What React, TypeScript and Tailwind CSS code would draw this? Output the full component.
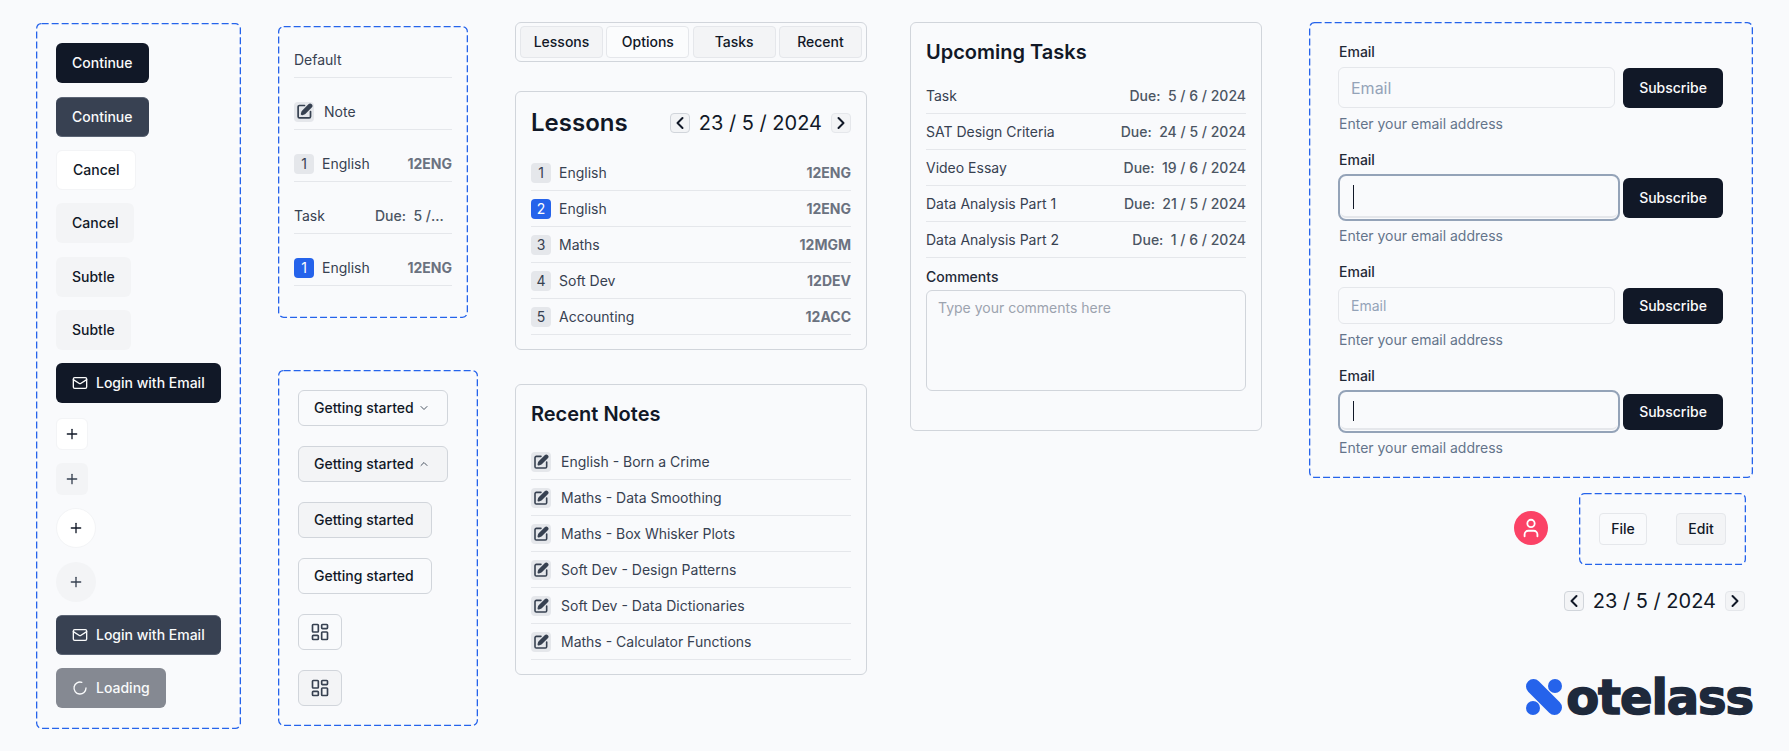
import { ReactNode } from "react";
import {
  ChevronDown,
  ChevronLeft,
  ChevronRight,
  ChevronUp,
  LayoutDashboard,
  LoaderCircle,
  Mail,
  Plus,
  User,
} from "lucide-react";

const BUTTON = "inline-flex items-center justify-center self-start rounded-md text-sm font-medium";
const ROUND_BUTTON = "inline-flex items-center justify-center self-start rounded-full text-sm font-medium";

const LESSONS = [
  { name: "English", code: "12ENG" },
  { name: "English", code: "12ENG", active: true },
  { name: "Maths", code: "12MGM" },
  { name: "Soft Dev", code: "12DEV" },
  { name: "Accounting", code: "12ACC" },
];

const NOTES = [
  "English - Born a Crime",
  "Maths - Data Smoothing",
  "Maths - Box Whisker Plots",
  "Soft Dev - Design Patterns",
  "Soft Dev - Data Dictionaries",
  "Maths - Calculator Functions",
];

const TASKS = [
  { name: "Task", due: "5 / 6 / 2024" },
  { name: "SAT Design Criteria", due: "24 / 5 / 2024" },
  { name: "Video Essay", due: "19 / 6 / 2024" },
  { name: "Data Analysis Part 1", due: "21 / 5 / 2024" },
  { name: "Data Analysis Part 2", due: "1 / 6 / 2024" },
];

function DashedBox({ className, children }: { className: string; children: ReactNode }) {
  return (
    <div className={`relative ${className}`}>
      <svg className="absolute inset-0 w-full h-full pointer-events-none" fill="none">
        <rect
          x="0.65"
          y="0.65"
          rx="5"
          className="w-[calc(100%-1.3px)] h-[calc(100%-1.3px)]"
          stroke="#2563eb"
          strokeWidth="1.3"
          strokeDasharray="7 3"
        />
      </svg>
      {children}
    </div>
  );
}

function Row({ children }: { children: ReactNode }) {
  return (
    <div className="flex h-9 items-center justify-between border-b border-[#e5e7eb] text-sm text-[#374151]">
      {children}
    </div>
  );
}

function NumberBadge({ n, active }: { n: number; active?: boolean }) {
  return (
    <span
      className={`flex h-5 w-5 items-center justify-center rounded text-sm ${
        active ? "bg-[#2563eb] text-white" : "bg-[#e5e7eb] text-[#374151]"
      }`}
    >
      {n}
    </span>
  );
}

function NoteBadge({ size = 16 }: { size?: number }) {
  return (
    <span className="flex h-5 w-5 items-center justify-center rounded bg-[#e5e7eb] text-[#374151]">
      <svg width={size} height={size} viewBox="0 0 24 24" fill="none" stroke="currentColor" strokeWidth="2.4" strokeLinecap="round" strokeLinejoin="round">
        <path d="M12 3.5H5a2 2 0 0 0-2 2V19a2 2 0 0 0 2 2h13.5a2 2 0 0 0 2-2v-7" />
        <path
          fill="currentColor"
          d="M18.375 2.625a1 1 0 0 1 3 3l-9.013 9.014a2 2 0 0 1-.853.505l-2.873.84a.5.5 0 0 1-.62-.62l.84-2.873a2 2 0 0 1 .506-.852z"
        />
      </svg>
    </span>
  );
}

function LessonRow({ n, name, code, active }: { n: number; name: string; code: string; active?: boolean }) {
  return (
    <Row>
      <span className="flex items-center gap-2">
        <NumberBadge n={n} active={active} />
        {name}
      </span>
      <span className="font-bold text-[#6b7280]">{code}</span>
    </Row>
  );
}

function NoteRow({ name }: { name: string }) {
  return (
    <Row>
      <span className="flex items-center gap-2.5">
        <NoteBadge />
        {name}
      </span>
    </Row>
  );
}

function DateNav() {
  return (
    <div className="flex items-center gap-[9px] text-xl text-[#111827]">
      <span className="flex h-5 w-5 items-center justify-center rounded border border-[#d1d5db] bg-[#f3f4f6]">
        <ChevronLeft size={20} strokeWidth={2.4} className="shrink-0" />
      </span>
      <span>23 / 5 / 2024</span>
      <span className="flex h-5 w-5 items-center justify-center rounded border border-[#e5e7eb] bg-[#f3f4f6]">
        <ChevronRight size={20} strokeWidth={2.4} className="shrink-0" />
      </span>
    </div>
  );
}

function Card({ className, children }: { className?: string; children: ReactNode }) {
  return <div className={`rounded-md border border-[#d1d5db] p-[15px] ${className ?? ""}`}>{children}</div>;
}

function EmailField({
  inputH,
  btnH,
  rowGap,
  helpGap,
  focused,
  caretH,
  placeholderSize,
  className,
}: {
  inputH: string;
  btnH: string;
  rowGap: string;
  helpGap: string;
  focused?: boolean;
  caretH?: string;
  placeholderSize?: string;
  className?: string;
}) {
  return (
    <div className={className}>
      <div className="pl-px text-sm leading-5 font-medium text-[#1f2937]">Email</div>
      <div className={`flex items-center ${rowGap} ${focused ? "gap-[3px]" : "gap-2"}`}>
        {focused ? (
          <div className={`${inputH} w-[282px] rounded-lg border-2 border-[#94a3b8] p-px`}>
            <div className="flex h-full items-center rounded-[5px] border-b-2 border-[#e5e7eb] pl-3">
              <span className={`${caretH} w-px bg-[#111827]`} />
            </div>
          </div>
        ) : (
          <input
            placeholder="Email"
            readOnly
            className={`${inputH} ${placeholderSize} w-[277px] rounded-md border border-[#e5e7eb] bg-transparent px-3 outline-none placeholder:text-[#94a3b8]`}
          />
        )}
        <button className={`${btnH} w-[100px] rounded-md bg-[#111827] text-sm font-medium text-[#f9fafb]`}>
          Subscribe
        </button>
      </div>
      <div className={`${helpGap} pl-px text-sm leading-5 text-[#64748b]`}>Enter your email address</div>
    </div>
  );
}

export default function App() {
  return (
    <div className="flex min-h-[751px] items-start overflow-hidden bg-[#f9fafc] pl-9 [font-family:Inter,sans-serif] text-[#111827]">
      {/* buttons */}
      <DashedBox className="mt-[23px] mr-[37px] flex h-[706px] w-[205px] shrink-0 flex-col gap-[13.33px] px-5 pt-[20.33px]">
        <button className={`${BUTTON} h-10 bg-[#111827] px-4 text-[#f9fafb]`}>Continue</button>
        <button className={`${BUTTON} h-10 border-t border-b border-[#5b6474] bg-[#384152] px-4 text-[#f9fafb]`}>Continue</button>
        <button className={`${BUTTON} h-10 border border-[#f3f4f6] bg-white px-4`}>Cancel</button>
        <button className={`${BUTTON} h-10 bg-[#f3f4f6] px-4`}>Cancel</button>
        <button className={`${BUTTON} h-10 bg-[#f3f4f6] px-4`}>Subtle</button>
        <button className={`${BUTTON} h-10 bg-[#f3f4f6] px-4`}>Subtle</button>
        <button className={`${BUTTON} h-10 gap-2 bg-[#111827] px-4 text-[#f9fafb]`}>
          <Mail size={16} />
          Login with Email
        </button>
        <button className={`${BUTTON} mt-px h-8 w-8 border border-[#f3f4f6] bg-white`}>
          <Plus size={16} />
        </button>
        <button className={`${BUTTON} h-8 w-8 bg-[#f3f4f6] text-[#374151]`}>
          <Plus size={16} />
        </button>
        <button className={`${ROUND_BUTTON} h-10 w-10 border border-[#f3f4f6] bg-white`}>
          <Plus size={16} />
        </button>
        <button className={`${ROUND_BUTTON} h-10 w-10 bg-[#f3f4f6] text-[#374151]`}>
          <Plus size={16} />
        </button>
        <button className={`${BUTTON} h-10 gap-2 border-t border-b border-[#5b6474] bg-[#384152] px-4 text-[#f9fafb]`}>
          <Mail size={16} />
          Login with Email
        </button>
        <button className={`${BUTTON} h-10 gap-2 bg-[#111827]/50 px-4 text-[#f9fafb]`}>
          <LoaderCircle size={16} />
          Loading
        </button>
      </DashedBox>

      {/* list row variants + outline buttons */}
      <div className="mt-[26px] mr-[37px] flex w-[200px] shrink-0 flex-col items-start gap-[52px]">
        <DashedBox className="flex w-[190px] flex-col gap-4 px-4 pt-4 pb-8">
          <Row>
            <span>Default</span>
          </Row>
          <Row>
            <span className="flex items-center gap-2.5">
              <NoteBadge size={17} />
              Note
            </span>
          </Row>
          <Row>
            <span className="flex items-center gap-2">
              <NumberBadge n={1} />
              English
            </span>
            <span className="font-bold text-[#6b7280]">12ENG</span>
          </Row>
          <Row>
            <span>Task</span>
            <span className="mr-[7px] w-[70px] truncate font-medium text-[#4b5563]">Due:&nbsp; 5 / 6 / 2024</span>
          </Row>
          <Row>
            <span className="flex items-center gap-2">
              <NumberBadge n={1} active />
              English
            </span>
            <span className="font-bold text-[#6b7280]">12ENG</span>
          </Row>
        </DashedBox>

        <DashedBox className="flex w-[200px] flex-col gap-5 p-5">
          <button className={`${BUTTON} h-9 gap-1 border border-[#d1d5db] pr-[17px] pl-[15px]`}>
            Getting started
            <ChevronDown size={12} className="text-[#4b5563]" />
          </button>
          <button className={`${BUTTON} h-9 gap-1 border border-[#d1d5db] bg-[#f3f4f6] pr-[17px] pl-[15px]`}>
            Getting started
            <ChevronUp size={12} className="text-[#4b5563]" />
          </button>
          <button className={`${BUTTON} h-9 border border-[#d1d5db] bg-[#f3f4f6] pr-[17px] pl-[15px]`}>Getting started</button>
          <button className={`${BUTTON} h-9 border border-[#d1d5db] pr-[17px] pl-[15px]`}>Getting started</button>
          <button className={`${BUTTON} h-9 w-11 border border-[#d1d5db] text-[#374151]`}>
            <LayoutDashboard size={20} />
          </button>
          <button className={`${BUTTON} h-9 w-11 border border-[#d1d5db] bg-[#f3f4f6] text-[#374151]`}>
            <LayoutDashboard size={20} />
          </button>
        </DashedBox>
      </div>

      {/* tabs + lessons + notes */}
      <div className="mt-[22.33px] mr-[43px] flex w-[352px] shrink-0 flex-col">
        <div className="flex h-10 justify-between rounded-md border border-[#d1d5db] px-1 py-[3px]">
          {["Lessons", "Options", "Tasks", "Recent"].map((tab) => (
            <button
              key={tab}
              className={`w-[83px] rounded border border-[#e5e7eb] text-sm font-medium ${
                tab === "Options" ? "bg-[#fbfcfd]" : "bg-[#f3f4f6]"
              }`}
            >
              {tab}
            </button>
          ))}
        </div>

        <Card className="mt-[29px] pb-[14px]">
          <div className="mb-4 flex h-8 items-center justify-between">
            <h2 className="text-2xl font-semibold">Lessons</h2>
            <DateNav />
          </div>
          {LESSONS.map((l, i) => (
            <LessonRow key={i} n={i + 1} name={l.name} code={l.code} active={l.active} />
          ))}
        </Card>

        <Card className="mt-[34px] pb-[14px]">
          <h2 className="mb-4 text-xl font-semibold">Recent Notes</h2>
          {NOTES.map((name) => (
            <NoteRow key={name} name={name} />
          ))}
        </Card>
      </div>

      {/* upcoming tasks */}
      <Card className="mt-[22.33px] mr-[47px] w-[352px] shrink-0 pb-[39px]">
        <h2 className="mb-3 text-xl font-semibold">Upcoming Tasks</h2>
        {TASKS.map((t) => (
          <Row key={t.name}>
            <span>{t.name}</span>
            <span className="font-medium text-[#4b5563]">Due:&nbsp; {t.due}</span>
          </Row>
        ))}
        <div className="mt-[9px] mb-[3px] text-sm leading-5 font-medium text-[#1f2937]">Comments</div>
        <textarea
          readOnly
          placeholder="Type your comments here"
          className="block h-[101px] w-full resize-none rounded-md border border-[#d1d5db] bg-transparent px-[11px] py-[7px] text-sm outline-none placeholder:text-[#9ca3af]"
        />
      </Card>

      {/* form states + misc */}
      <div className="mt-[22px] flex w-[444px] shrink-0 flex-col">
        <DashedBox className="h-[456px] pt-[20.33px] pl-[29px]">
          <EmailField inputH="h-[41px]" btnH="h-10" rowGap="mt-[5px]" helpGap="mt-1.5" placeholderSize="text-base" />
          <EmailField inputH="h-[47px]" btnH="h-10" rowGap="mt-[4.33px]" helpGap="mt-[5px]" focused caretH="h-6" className="mt-[15.67px]" />
          <EmailField inputH="h-[37.5px]" btnH="h-9" rowGap="mt-[5px]" helpGap="mt-[5.5px]" placeholderSize="text-sm" className="mt-[15.67px]" />
          <EmailField inputH="h-[43px]" btnH="h-9" rowGap="mt-[4.33px]" helpGap="mt-[4.67px]" focused caretH="h-5" className="mt-4" />
        </DashedBox>

        <div className="mt-[15px] flex items-center justify-end gap-[31px] pr-[7px]">
          <span className="mb-0.5 flex h-[34px] w-[34px] items-center justify-center rounded-full bg-[#fb4266] text-white">
            <User size={22} />
          </span>
          <DashedBox className="flex w-[167px] items-start justify-between p-5">
            <button className="h-8 w-12 rounded border border-[#e5e7eb] text-sm font-medium">File</button>
            <button className="h-8 w-[50px] rounded border border-[#e5e7eb] bg-[#f3f4f6] text-sm font-medium">Edit</button>
          </DashedBox>
        </div>

        <div className="mt-[22px] flex justify-end pr-2">
          <DateNav />
        </div>

        <div className="mt-[64px] flex items-center justify-end gap-1">
          <svg width="36" height="36" viewBox="0 0 36 36" className="shrink-0">
            <line x1="7.5" y1="7.5" x2="28.5" y2="28.5" stroke="#2563eb" strokeWidth="15" strokeLinecap="round" />
            <circle cx="29" cy="7" r="7" fill="#2563eb" />
            <circle cx="7" cy="29" r="7" fill="#2563eb" />
          </svg>
          <span className="text-[48px] leading-9 font-bold tracking-[-1.1px] text-[#1e293b] [font-family:'DejaVu_Sans',sans-serif] [-webkit-text-stroke:1.5px_#1e293b]">
            otelass
          </span>
        </div>
      </div>
    </div>
  );
}
